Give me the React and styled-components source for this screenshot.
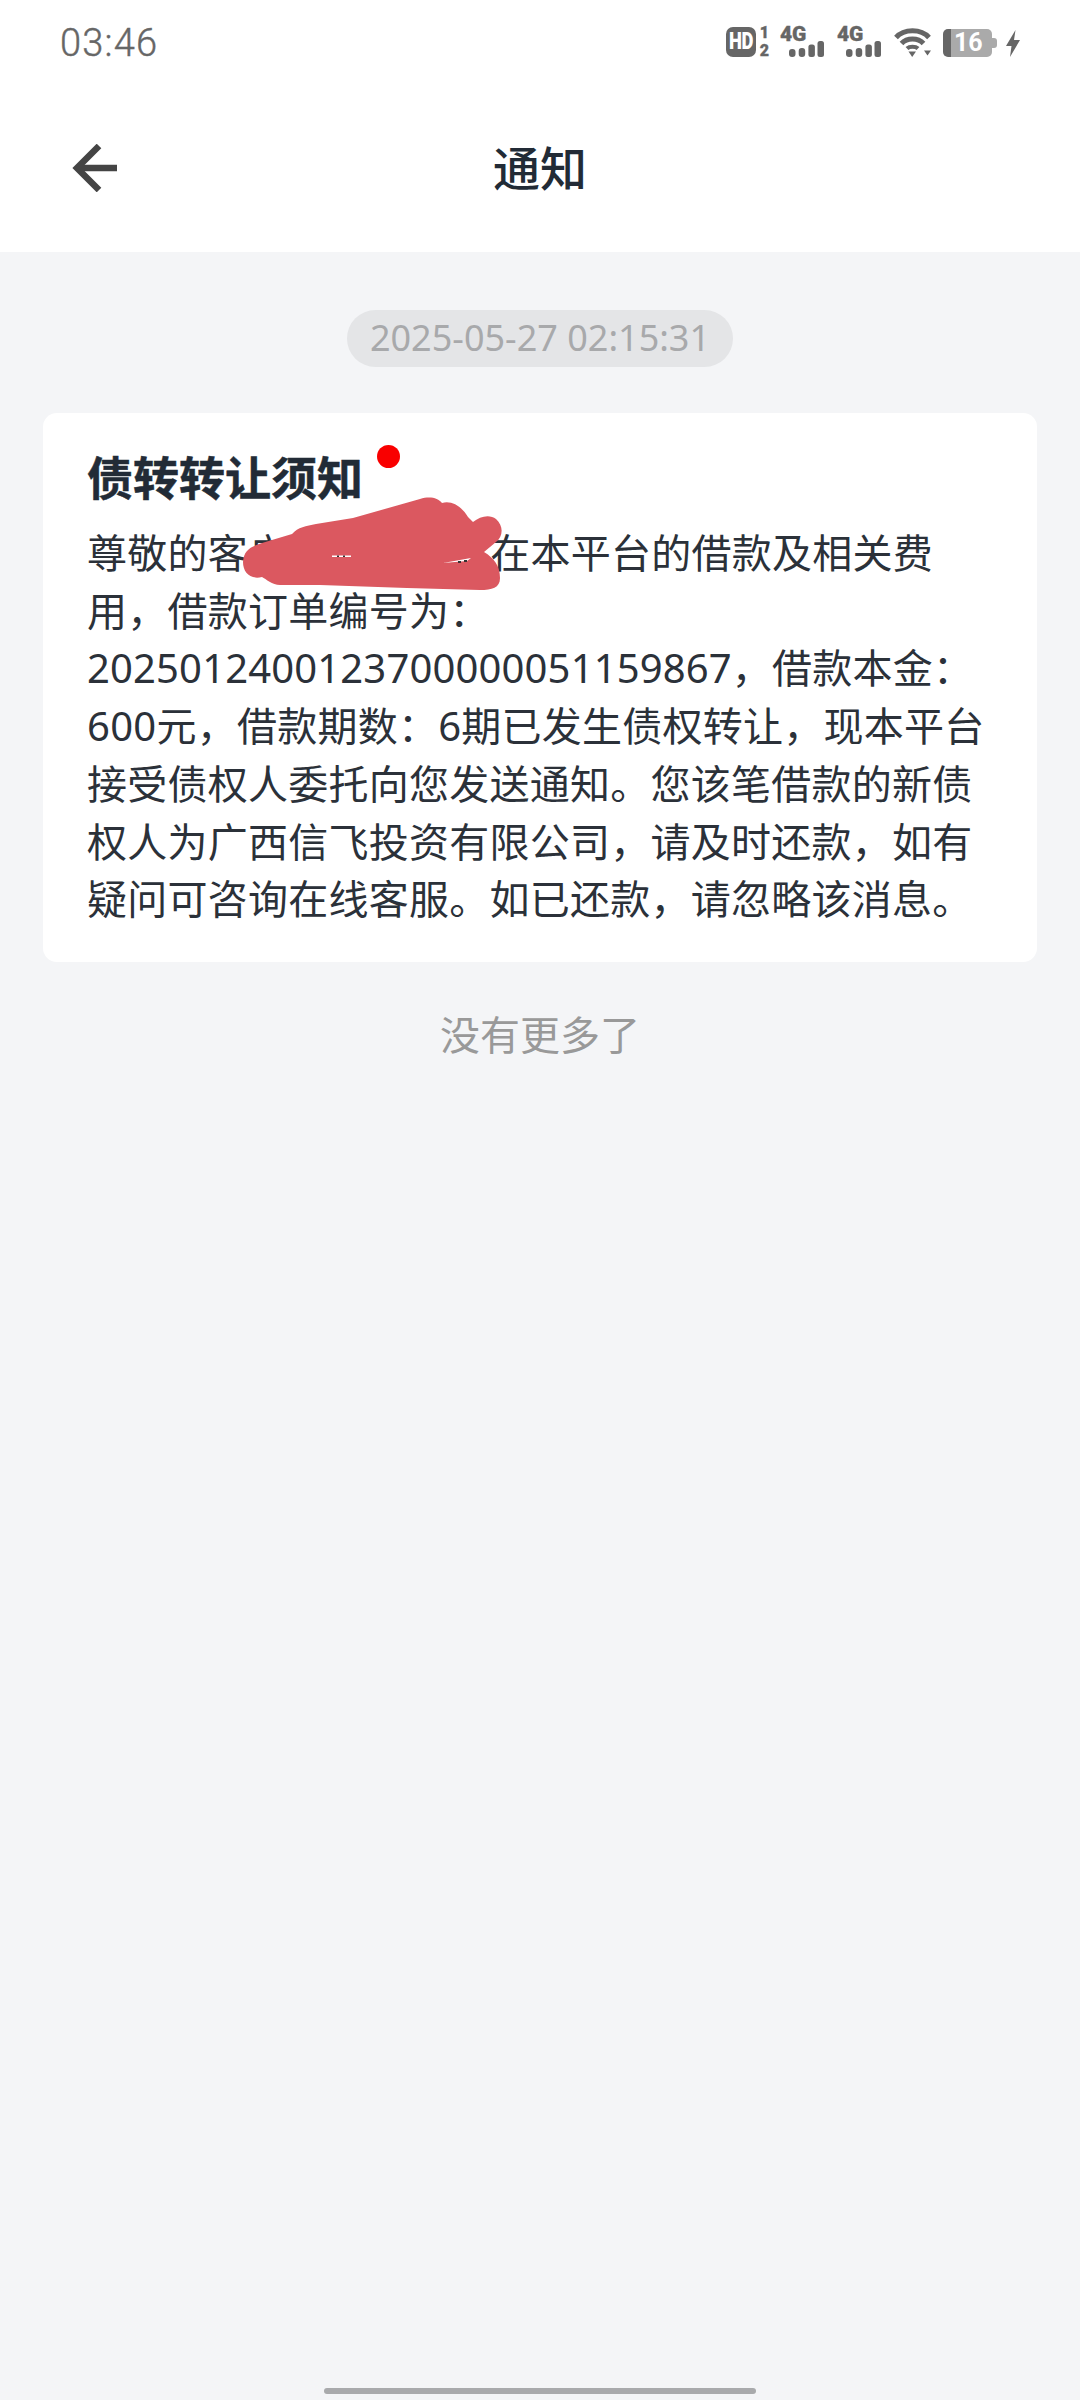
import React from "react";
import styled, { createGlobalStyle } from "styled-components";

const Global = createGlobalStyle`
  html, body { margin: 0; padding: 0; background: #f4f5f7; }
  * { box-sizing: border-box; }
`;
const sans = `"Noto Sans", "Noto Sans CJK SC", sans-serif`;

const Page = styled.div`
  width: 1080px; height: 2400px; display: flex; flex-direction: column;
  background: #f4f5f7; font-family: ${sans}; overflow: hidden;
`;
const Header = styled.header`
  height: 252px; background: #fff; display: flex; flex-direction: column; flex: none;
`;
const StatusBar = styled.div`
  height: 84px; display: flex; align-items: flex-start; justify-content: space-between;
  padding: 27px 60px 0 60px; color: #666;
`;
const Time = styled.span`
  font-family: Roboto, sans-serif; font-size: 38px; line-height: 32px; font-weight: 300;
  letter-spacing: 1.2px; -webkit-text-stroke: 0.4px #666;
`;
const StatusIcons = styled.div`display: flex; align-items: flex-start; height: 30px;`;
const HdBadge = styled.span`
  display: flex; align-items: center; justify-content: center; flex: none;
  width: 30px; height: 30px; background: #666; border-radius: 7px; color: #fff;
`;
const HdText = styled.span`
  display: block; font: 900 23px/30px Roboto, sans-serif; letter-spacing: -0.5px; transform: scaleX(0.8);
`;
const Sims = styled.span`
  display: flex; flex-direction: column; justify-content: space-between; width: 13px; flex: none;
  height: 30px; margin-left: 2px; font: 900 16px/12px Roboto, sans-serif; color: #666; text-align: center;
  -webkit-text-stroke: 0.3px #666;
`;
const Signal = styled.span`
  display: flex; flex-direction: column; width: 44px; height: 30px; margin-left: ${p => p.$gap}px; flex: none;
`;
const NetLabel = styled.span`
  font: 900 21px/14px Roboto, sans-serif; color: #666; letter-spacing: -0.2px;
  -webkit-text-stroke: 0.3px #666;
`;
const BarsIcon = styled.svg`width: 36px; height: 16px; margin-left: 9px; flex: none; fill: #666;`;
const Wifi = styled.svg`width: 37px; height: 30px; margin-left: 13px; flex: none; color: #666;`;
const Battery = styled.span`
  display: flex; width: 49px; height: 28px; margin: 2px 0 0 12px; position: relative; flex: none;
`;
const BatteryCap = styled.span`width: 8px; height: 28px; background: #666; border-radius: 5px 0 0 5px;`;
const BatteryBody = styled.span`
  flex: 1; background: #aaa; border-radius: 0 5px 5px 0; color: #fff; padding-left: 3px;
  font: 700 25px/28px Roboto, sans-serif;
`;
const BatteryNub = styled.span`
  position: absolute; right: -5px; top: 9px; width: 5px; height: 10px; background: #aaa; border-radius: 0 3px 3px 0;
`;
const Bolt = styled.svg`width: 14px; height: 27px; margin: 3px 0 0 14px; flex: none;`;

const Nav = styled.nav`
  flex: 1; position: relative; display: flex; align-items: center; justify-content: center;
`;
const Back = styled.svg`position: absolute; left: 72px; top: 60px; width: 46px; height: 48px;`;
const NavTitle = styled.h1`
  margin: 0; font: 500 47px/60px ${sans}; color: #222b36;
`;

const Feed = styled.main`
  flex: 1; display: flex; flex-direction: column; align-items: center; padding: 58px 43px 0;
`;
const Stamp = styled.div`
  height: 57px; padding: 0 23px; border-radius: 29px; background: #e4e5e7; color: #a8a9ab;
  font-size: 36px; line-height: 56px;
`;
const Card = styled.article`
  position: relative; width: 994px; height: 549px; margin-top: 46px; padding: 33px 44px 0;
  background: #fff; border-radius: 14px;
`;
const CardTitle = styled.h2`
  margin: 0; position: relative; font: 700 46px/62px ${sans}; color: #222b36; width: fit-content;
  -webkit-text-stroke: 0.5px #222b36;
`;
const Dot = styled.span`
  position: absolute; right: -37px; top: -1px; width: 23px; height: 23px; border-radius: 50%; background: #f90000;
`;
const Body = styled.p`
  margin: 16px 0 0; font-size: 40px; line-height: 57.7px; color: #2b3139; letter-spacing: 0.25px;
`;
const Masked = styled.span`display: inline-block; width: 202px;`;
const Amount = styled.span`white-space: nowrap;`;
const OrderNo = styled.span`letter-spacing: 0.15px;`;
const Scribble = styled.svg`position: absolute; left: 0; top: 0; width: 994px; height: 549px; pointer-events: none;`;
const End = styled.div`
  margin-top: 44px; font-size: 40px; line-height: 58px; color: #999;
`;
const HomeBar = styled.div`
  margin: auto auto 6px; width: 432px; height: 6px; border-radius: 3px; background: #a9aaac; flex: none;
`;

const Bars = () => (
  <BarsIcon viewBox="0 0 36 16">
    <rect x="0" y="8" width="6.5" height="8" rx="3" />
    <rect x="9.7" y="7" width="6.5" height="9" rx="3" />
    <rect x="19.4" y="3.5" width="6.5" height="12.5" rx="2.5" />
    <rect x="28.5" y="0" width="6.5" height="16" rx="2.5" />
  </BarsIcon>
);

export default function App() {
  return (
    <Page>
      <Global />
      <Header>
        <StatusBar>
          <Time>03:46</Time>
          <StatusIcons>
            <HdBadge><HdText>HD</HdText></HdBadge>
            <Sims><span>1</span><span>2</span></Sims>
            <Signal $gap={9}><NetLabel>4G</NetLabel><Bars /></Signal>
            <Signal $gap={13}><NetLabel>4G</NetLabel><Bars /></Signal>
            <Wifi viewBox="0 0 37 30">
              <path d="M2 10.5 C10 1.5 27 1.5 35 10.5" fill="none" stroke="currentColor" strokeWidth="5" />
              <path d="M7.5 16.5 C13 10.5 24 10.5 29.5 16.5" fill="none" stroke="currentColor" strokeWidth="5" />
              <path d="M13 21.5 C15.5 19 21.5 19 24 21.5" fill="none" stroke="currentColor" strokeWidth="4" />
              <path d="M14.5 24.5 L22 24.5 L18.2 30 Z" fill="currentColor" />
              <path d="M30 23.5 L37 23.5 L33.5 28.5 Z" fill="currentColor" />
            </Wifi>
            <Battery>
              <BatteryCap />
              <BatteryBody>16</BatteryBody>
              <BatteryNub />
            </Battery>
            <Bolt viewBox="0 0 14 27">
              <path d="M9.5 0 L0 16 L5.5 16 L4 27 L14 10 L8 10 Z" fill="#666" />
            </Bolt>
          </StatusIcons>
        </StatusBar>
        <Nav>
          <Back viewBox="0 0 46 48" fill="none">
            <path d="M27 2 L5 24 L27 46" stroke="#444" strokeWidth="6.5" />
            <path d="M5 24 L45 24" stroke="#444" strokeWidth="6.5" />
          </Back>
          <NavTitle>通知</NavTitle>
        </Nav>
      </Header>
      <Feed>
        <Stamp>2025-05-27 02:15:31</Stamp>
        <Card>
          <CardTitle>债转转让须知<Dot /></CardTitle>
          <Body>
            尊敬的客户<Masked />在本平台的借款及相关费用，借款订单编号为：<OrderNo>2025012400123700000051159867</OrderNo>，借款本金：<Amount>600元</Amount>，借款期数：6期已发生债权转让，现本平台接受债权人委托向您发送通知。您该笔借款的新债权人为广西信飞投资有限公司，请及时还款，如有疑问可咨询在线客服。如已还款，请忽略该消息。
          </Body>
          <Scribble viewBox="43 413 994 549">
            <path
              d="M243 562 C244 550 250 547 262 543 L292 534 C298 527 306 526 316 524 L353 518 L420 499 C430 496 438 498 442 503 C452 500 462 507 468 517 L473 522 C480 516 490 514 496 519 C504 526 503 537 496 542 L484 552 C494 558 500 566 500 578 C500 588 492 590 480 590 L407 588 L320 585 L280 585 C272 585 266 579 262 577 C250 580 243 572 243 562 Z"
              fill="#db5860"
            />
            <path d="M332 555.5 h19 v1.5 h-19 Z M443 563 L471 558 L467 561 Z" fill="#fff" />
            <path d="M337 555.5 h2 v1.5 h-2 Z M343 555.5 h2 v1.5 h-2 Z M458 561 h3 v2 h-3 Z M464 560 h3 v2 h-3 Z" fill="#333" />
          </Scribble>
        </Card>
        <End>没有更多了</End>
      </Feed>
      <HomeBar />
    </Page>
  );
}
